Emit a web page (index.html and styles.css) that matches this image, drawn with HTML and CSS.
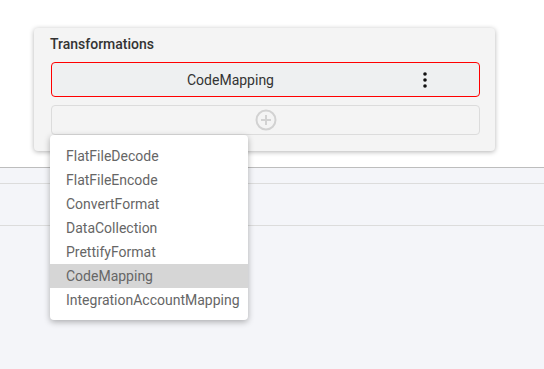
FILE: index.html
```html
<!DOCTYPE html>
<html lang="en">

<head>
    <meta charset="UTF-8">
    <title>Transformations</title>
    <link rel="stylesheet" href="styles.css">
</head>

<body>
    <div class="page">
        <div class="top">
            <div class="card">
                <div class="card-title">Transformations</div>
                <div class="step active">
                    <span class="step-name">CodeMapping</span>
                    <span class="step-menu">
                        <svg width="4" height="16" viewBox="0 0 4 16">
                            <circle cx="2" cy="2" r="1.8" />
                            <circle cx="2" cy="8" r="1.8" />
                            <circle cx="2" cy="14" r="1.8" />
                        </svg>
                    </span>
                </div>
                <div class="add-step">
                    <svg width="22" height="22" viewBox="0 0 22 22">
                        <circle cx="11" cy="11" r="9.5" fill="none" stroke="#d2d2d2" stroke-width="2" />
                        <path d="M11 6v10M6 11h10" stroke="#d2d2d2" stroke-width="2" />
                    </svg>
                </div>
            </div>
            <ul class="dropdown">
                <li>FlatFileDecode</li>
                <li>FlatFileEncode</li>
                <li>ConvertFormat</li>
                <li>DataCollection</li>
                <li>PrettifyFormat</li>
                <li class="selected">CodeMapping</li>
                <li>IntegrationAccountMapping</li>
            </ul>
        </div>
        <div class="bar"></div>
        <div class="row"></div>
        <div class="rest"></div>
    </div>
</body>

</html>
```

FILE: styles.css
```css
body,
html {
    margin: 0;
    padding: 0;
    height: 100%;
    font-family: Roboto, Arial, sans-serif;
    background-color: #f4f5f9;
}

.page {
    height: 100%;
    display: flex;
    flex-direction: column;
}

.top {
    position: relative;
    height: 168px;
    flex-shrink: 0;
    background: white;
    border-bottom: 1px solid #bdbdbd;
    padding: 28px 0 0 34px;
    box-sizing: border-box;
}

.card {
    width: 461px;
    height: 123px;
    box-sizing: border-box;
    background: #f4f4f4;
    border-radius: 4px;
    box-shadow: 0 1px 5px rgba(0, 0, 0, 0.3);
    padding: 8px 15px 0 17px;
}

.card-title {
    font-size: 14px;
    font-weight: 500;
    color: #333;
    height: 16px;
    line-height: 16px;
    margin-left: -1px;
    margin-bottom: 10px;
}

.step {
    display: flex;
    align-items: center;
    height: 35px;
    box-sizing: border-box;
    border: 1px solid #e0e0e0;
    border-radius: 4px;
    background: #eef0f1;
}

.step.active {
    border-color: red;
}

.step-name {
    flex: 1;
    text-align: center;
    font-size: 14px;
    color: #333;
}

.step-menu {
    width: 70px;
    padding-left: 14px;
    box-sizing: border-box;
    display: flex;
    align-items: center;
}

.step-menu svg {
    fill: #111;
}

.add-step {
    margin-top: 8px;
    height: 30px;
    box-sizing: border-box;
    border: 1px solid #dcdcdc;
    border-radius: 4px;
    display: flex;
    justify-content: center;
    align-items: center;
}

.dropdown {
    position: absolute;
    left: 50px;
    top: 135px;
    width: 198px;
    margin: 0;
    padding: 9px 0 8px;
    list-style: none;
    background: white;
    border-radius: 4px;
    box-shadow: 0 2px 6px rgba(0, 0, 0, 0.3);
    z-index: 2;
}

.dropdown li {
    height: 24px;
    line-height: 24px;
    padding-left: 16px;
    font-size: 14px;
    color: #666;
}

.dropdown li.selected {
    background: #d6d6d6;
}

.bar {
    height: 15px;
    border-bottom: 1px solid #dcdcdc;
}

.row {
    height: 41px;
    border-bottom: 1px solid #dcdcdc;
}

.rest {
    flex: 1;
}
```
